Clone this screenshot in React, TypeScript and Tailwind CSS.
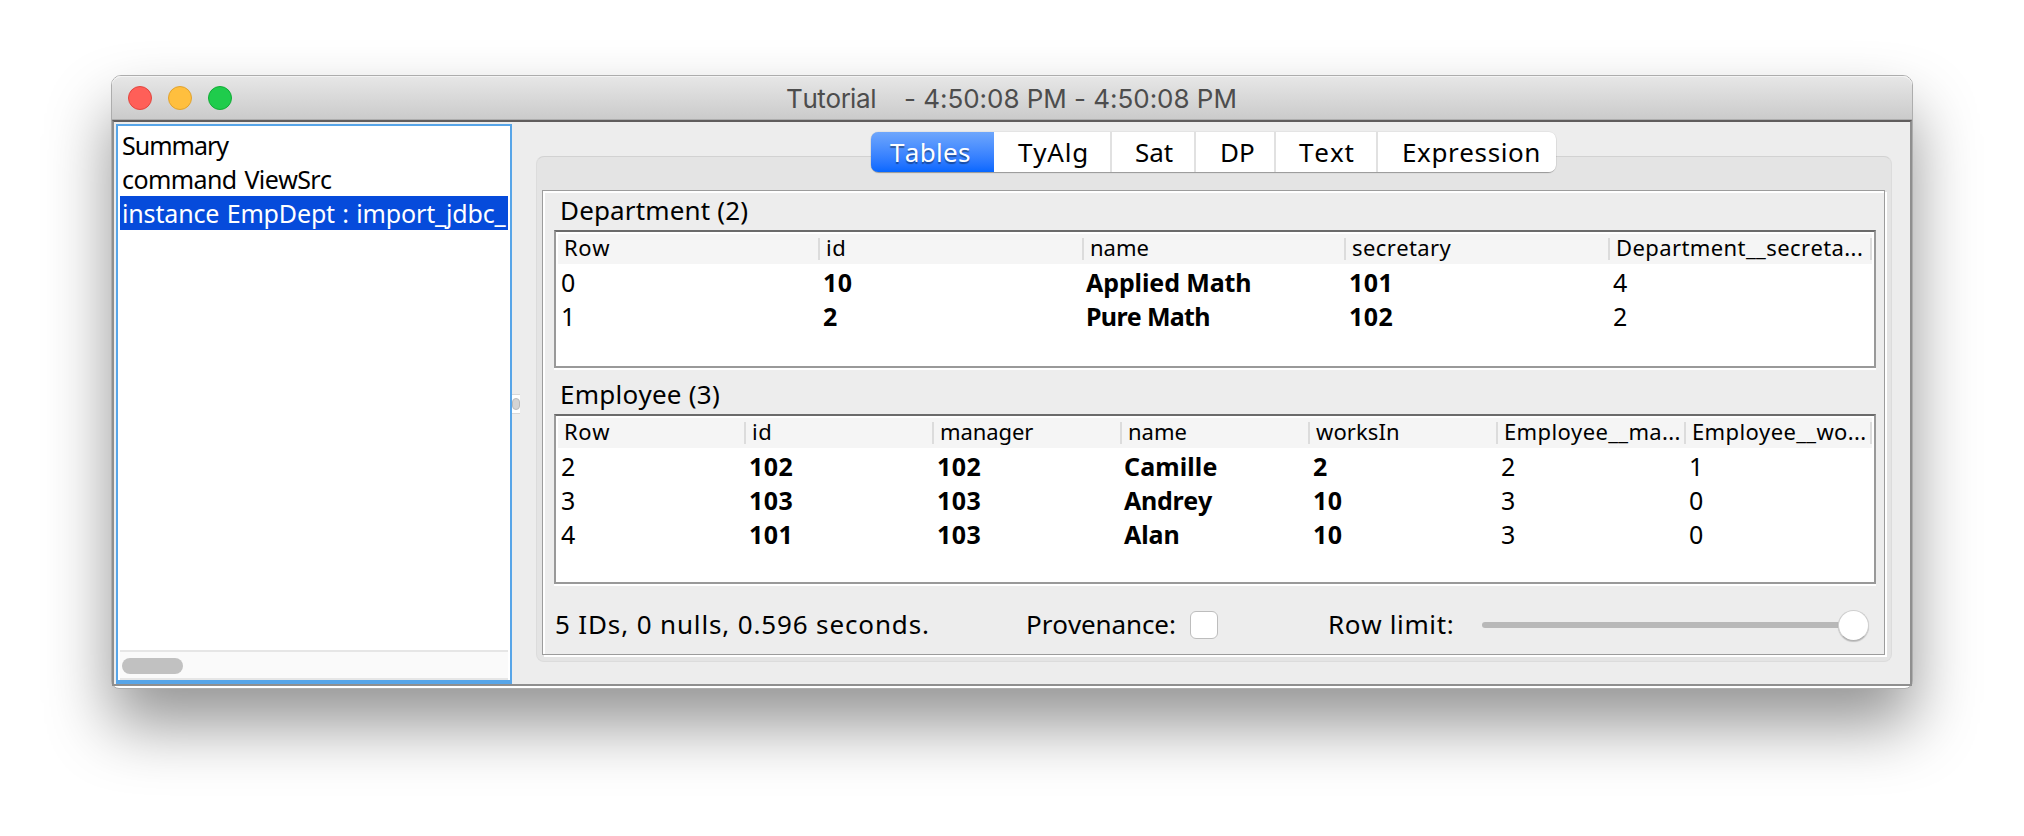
type Cell = { text: string; bold?: boolean; track?: string };
type Head = { text: string; track: string };

const UI = "font-['Noto_Sans','Open_Sans',sans-serif] [font-kerning:none]";

const departmentHeads: Head[] = [
  { text: "Row", track: "tracking-[0.6px]" },
  { text: "id", track: "tracking-[0.5px]" },
  { text: "name", track: "tracking-[0px]" },
  { text: "secretary", track: "tracking-[0.4px]" },
  { text: "Department__secreta...", track: "tracking-[0.4px]" },
];

const departmentRows: Cell[][] = [
  [{ text: "0" }, { text: "10", bold: true }, { text: "Applied Math", bold: true }, { text: "101", bold: true }, { text: "4" }],
  [{ text: "1" }, { text: "2", bold: true }, { text: "Pure Math", bold: true, track: "tracking-[-0.7px]" }, { text: "102", bold: true }, { text: "2" }],
];

const employeeHeads: Head[] = [
  { text: "Row", track: "tracking-[0.6px]" },
  { text: "id", track: "tracking-[0.5px]" },
  { text: "manager", track: "tracking-[-0.1px]" },
  { text: "name", track: "tracking-[0px]" },
  { text: "worksIn", track: "tracking-[0.1px]" },
  { text: "Employee__ma...", track: "tracking-[0.35px]" },
  { text: "Employee__wo...", track: "tracking-[0.35px]" },
];

const employeeRows: Cell[][] = [
  [{ text: "2" }, { text: "102", bold: true }, { text: "102", bold: true }, { text: "Camille", bold: true, track: "tracking-[0.1px]" }, { text: "2", bold: true }, { text: "2" }, { text: "1" }],
  [{ text: "3" }, { text: "103", bold: true }, { text: "103", bold: true }, { text: "Andrey", bold: true, track: "tracking-[-0.3px]" }, { text: "10", bold: true }, { text: "3" }, { text: "0" }],
  [{ text: "4" }, { text: "101", bold: true }, { text: "103", bold: true }, { text: "Alan", bold: true }, { text: "10", bold: true }, { text: "3" }, { text: "0" }],
];

function cellStyle(cell: Cell) {
  if (!cell.bold) return "pl-[3px]";
  if (/\d/.test(cell.text)) return "pl-[3px] font-bold tracking-[0.5px]";
  return `pl-[2px] font-bold ${cell.track ?? "tracking-[-0.1px]"}`;
}

function DataTable({ heads, rows, cols, height }: { heads: Head[]; rows: Cell[][]; cols: string; height: string }) {
  return (
    <div className={`${height} border-2 border-[#999] border-t-[#6b6b6b] bg-white p-0.5 shadow-[0_2px_0_#fff]`}>
      <div className={`grid ${cols} h-[30px] bg-[#f5f5f5]`}>
        {heads.map((h, i) => (
          <div key={i} className="flex h-[26px] items-end justify-between">
            <span className={`${h.track} -mb-px pl-[6px] text-[22px] leading-[28px] whitespace-nowrap`}>{h.text}</span>
            <span className="-ml-2 h-[22px] w-0.5 shrink-0 bg-[#dcdcdc]" />
          </div>
        ))}
      </div>
      {rows.map((row, r) => (
        <div key={r} className={`grid ${cols} h-[34px]`}>
          {row.map((c, i) => (
            <span key={i} className={`pt-px text-[25px] leading-[34px] whitespace-nowrap ${cellStyle(c)}`}>
              {c.text}
            </span>
          ))}
        </div>
      ))}
    </div>
  );
}

function TitleBar() {
  return (
    <div className="flex h-[44px] items-center rounded-t-[9px] border-b border-[#adadad] bg-linear-to-b from-[#e7e7e7] to-[#cbcbcb] pl-4 shadow-[inset_0_1px_0_#f4f4f4]">
      <div className="flex gap-4">
        <span className="size-6 rounded-full border border-[#e2463f] bg-[#ff5f58]" />
        <span className="size-6 rounded-full border border-[#e1a32f] bg-[#ffbf3e]" />
        <span className="size-6 rounded-full border border-[#12ac36] bg-[#1fcc4c]" />
      </div>
      <div className="ml-[554px] flex pt-0.5 text-[26px] leading-[34px] text-[#4d4d4d] font-['Inter',sans-serif]">
        <span className="w-[118px] tracking-[-0.4px]">Tutorial</span>
        <span className="tracking-[-0.03px] whitespace-nowrap">- 4:50:08 PM - 4:50:08 PM</span>
      </div>
    </div>
  );
}

function Outline() {
  return (
    <div className="mt-0.5 ml-0.5 flex h-[560px] w-[396px] shrink-0 flex-col border-2 border-b-4 border-[#57a5e8] bg-white px-0.5 pt-0.5 text-[25px] leading-[34px]">
      <div className="h-[34px] pl-[2px] tracking-[-1px]">Summary</div>
      <div className="h-[34px] pl-[2px] tracking-[-0.6px] [word-spacing:2px]">command ViewSrc</div>
      <div className="h-[34px] overflow-hidden bg-[#064bdb] pl-[2px] tracking-[-0.15px] [word-spacing:1px] whitespace-nowrap text-white">instance EmpDept : import_jdbc_</div>
      <div className="mt-auto flex h-[30px] items-center border-y-2 border-[#e6e6e6] bg-[#fafafa] pl-0.5">
        <span className="mt-0.5 h-4 w-[61px] rounded-full bg-[#c1c1c1]" />
      </div>
    </div>
  );
}

function Tabs() {
  return (
    <div className="z-10 mr-px -mb-4 flex h-10 self-center rounded-lg text-[26px] leading-[41px] shadow-[0_1px_1px_#00000050,0_0_1px_#00000060]">
      <span className="w-[123px] rounded-l-[7px] bg-linear-to-b from-[#6ea6fc] to-[#0567ff] pl-[19px] tracking-[0.3px] text-white text-shadow-[0_2px_1px_#00000060]">Tables</span>
      <span className="w-[118px] border-r-2 border-[#e1e1e1] bg-white pl-[24px] tracking-[0.8px]">TyAlg</span>
      <span className="w-[84px] border-r-2 border-[#e1e1e1] bg-white pl-[23px]">Sat</span>
      <span className="w-[80px] border-r-2 border-[#e1e1e1] bg-white pl-[24px]">DP</span>
      <span className="w-[102px] border-r-2 border-[#e1e1e1] bg-white pl-[23px] tracking-[0.9px]">Text</span>
      <span className="w-[178px] rounded-r-[7px] bg-white pl-[24px] tracking-[0.6px]">Expression</span>
    </div>
  );
}

function Footer() {
  return (
    <div className="grid h-[70px] grid-cols-[471px_164px_138px_154px_387px] items-center pt-3 pl-px text-[26px] leading-[38px]">
      <span className="-mt-0.5 tracking-[0.86px]">5 IDs, 0 nulls, 0.596 seconds.</span>
      <span className="-mt-0.5 tracking-[-0.1px]">Provenance:</span>
      <span className="size-7 rounded-md border border-[#bdbdbd] bg-white" />
      <span className="-mt-0.5 tracking-[0.65px]">Row limit:</span>
      <div className="flex items-center">
        <span className="-mr-1 h-1.5 flex-1 rounded-full bg-[#b8b8b8]" />
        <span className="size-[31px] rounded-full border border-[#cfcfcf] border-b-[#b0b0b0] bg-white shadow-[0_1px_1px_#00000030]" />
      </div>
    </div>
  );
}

export default function App() {
  return (
    <div className={`h-[836px] w-[2024px] overflow-hidden bg-white pt-[75px] pl-[111px] text-black ${UI}`}>
      <div className="h-[614px] w-[1802px] rounded-t-[10px] rounded-b-[8px] border border-[#adadad] bg-white shadow-[0_36px_64px_rgba(0,0,0,0.42)]">
        <TitleBar />
        <div className="flex h-[566px] border-2 border-[#8f8f8f] border-t-[#605d5d] bg-[#ededed]">
          <Outline />
          <div className="flex w-6 shrink-0 items-center">
            <div className="mt-[2px] flex h-5 w-2 items-center overflow-hidden border-y border-[#d8d8d8] bg-white">
              <span className="h-3 w-2 rounded-[4px] border border-[#bababa] bg-[#d4d4d4]" />
            </div>
          </div>
          <div className="flex w-[1356px] flex-col pt-2.5">
            <Tabs />
            <div className="h-[506px] rounded-[8px] border border-[#dcdcdc] border-t-[#d2d2d2] bg-[#e4e4e4] pt-[33px] pl-[5px]">
              <div className="h-[465px] w-[1343px] border border-[#9c9c9c] bg-[#ededed] pr-2 pl-[11px] shadow-[2px_2px_0_#fff,inset_2px_2px_0_#fff]">
                <div className="h-[39px] pl-[6px] text-[26px] leading-[38px] tracking-[0.15px]">Department (2)</div>
                <DataTable heads={departmentHeads} rows={departmentRows} cols="grid-cols-[262px_264px_262px_264px_262px]" height="h-[138px]" />
                <div className="h-[46px] pt-[7px] pl-[6px] text-[26px] leading-[38px] tracking-[0.25px]">Employee (3)</div>
                <DataTable heads={employeeHeads} rows={employeeRows} cols="grid-cols-[188px_188px_188px_188px_188px_188px_186px]" height="h-[170px]" />
                <Footer />
              </div>
            </div>
          </div>
        </div>
      </div>
    </div>
  );
}
